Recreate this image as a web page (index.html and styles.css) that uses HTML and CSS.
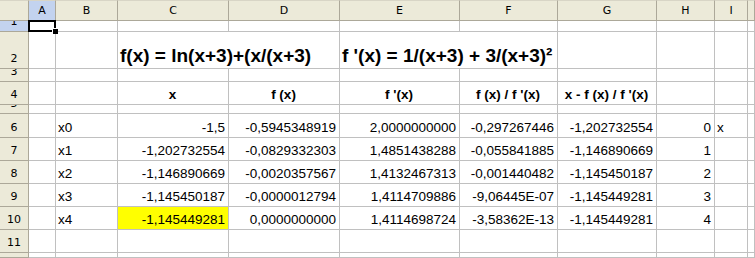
FILE: index.html
```html
<html>
    <head>
        <title>Newton - ln(x+3)</title>
        <link rel="stylesheet" href="styles.css">
    </head>
    <body>
        <div class="sheet">
            <div class="corner"></div>
            <div class="colhead sel">A</div>
            <div class="colhead">B</div>
            <div class="colhead">C</div>
            <div class="colhead">D</div>
            <div class="colhead">E</div>
            <div class="colhead">F</div>
            <div class="colhead">G</div>
            <div class="colhead">H</div>
            <div class="colhead">I</div>
            <div class="colhead"></div>

            <div class="rowhead sel">1</div>
            <div class="cell active"><span class="frame"><span class="handle"></span></span></div>
            <div class="cell"></div><div class="cell"></div><div class="cell"></div><div class="cell"></div>
            <div class="cell"></div><div class="cell"></div><div class="cell"></div><div class="cell"></div><div class="cell"></div>

            <div class="rowhead">2</div>
            <div class="cell"></div><div class="cell"></div>
            <div class="cell title wide">f(x) = ln(x+3)+(x/(x+3)</div>
            <div class="cell title wide">f '(x) = 1/(x+3) + 3/(x+3)²</div>
            <div class="cell"></div><div class="cell"></div><div class="cell"></div><div class="cell"></div>

            <div class="rowhead">3</div>
            <div class="cell"></div><div class="cell"></div><div class="cell"></div><div class="cell"></div><div class="cell"></div>
            <div class="cell"></div><div class="cell"></div><div class="cell"></div><div class="cell"></div><div class="cell"></div>

            <div class="rowhead">4</div>
            <div class="cell"></div><div class="cell"></div>
            <div class="cell hdr">x</div>
            <div class="cell hdr">f (x)</div>
            <div class="cell hdr">f '(x)</div>
            <div class="cell hdr">f (x) / f '(x)</div>
            <div class="cell hdr">x - f (x) / f '(x)</div>
            <div class="cell"></div><div class="cell"></div><div class="cell"></div>

            <div class="rowhead">5</div>
            <div class="cell"></div><div class="cell"></div><div class="cell"></div><div class="cell"></div><div class="cell"></div>
            <div class="cell"></div><div class="cell"></div><div class="cell"></div><div class="cell"></div><div class="cell"></div>

            <div class="rowhead">6</div>
            <div class="cell"></div>
            <div class="cell">x0</div>
            <div class="cell num">-1,5</div>
            <div class="cell num">-0,5945348919</div>
            <div class="cell num">2,0000000000</div>
            <div class="cell num">-0,297267446</div>
            <div class="cell num">-1,202732554</div>
            <div class="cell num">0</div>
            <div class="cell">x</div>
            <div class="cell"></div>

            <div class="rowhead">7</div>
            <div class="cell"></div>
            <div class="cell">x1</div>
            <div class="cell num">-1,202732554</div>
            <div class="cell num">-0,0829332303</div>
            <div class="cell num">1,4851438288</div>
            <div class="cell num">-0,055841885</div>
            <div class="cell num">-1,146890669</div>
            <div class="cell num">1</div>
            <div class="cell"></div><div class="cell"></div>

            <div class="rowhead">8</div>
            <div class="cell"></div>
            <div class="cell">x2</div>
            <div class="cell num">-1,146890669</div>
            <div class="cell num">-0,0020357567</div>
            <div class="cell num">1,4132467313</div>
            <div class="cell num">-0,001440482</div>
            <div class="cell num">-1,145450187</div>
            <div class="cell num">2</div>
            <div class="cell"></div><div class="cell"></div>

            <div class="rowhead">9</div>
            <div class="cell"></div>
            <div class="cell">x3</div>
            <div class="cell num">-1,145450187</div>
            <div class="cell num">-0,0000012794</div>
            <div class="cell num">1,4114709886</div>
            <div class="cell num">-9,06445E-07</div>
            <div class="cell num">-1,145449281</div>
            <div class="cell num">3</div>
            <div class="cell"></div><div class="cell"></div>

            <div class="rowhead">10</div>
            <div class="cell"></div>
            <div class="cell">x4</div>
            <div class="cell num result">-1,145449281</div>
            <div class="cell num">0,0000000000</div>
            <div class="cell num">1,4114698724</div>
            <div class="cell num">-3,58362E-13</div>
            <div class="cell num">-1,145449281</div>
            <div class="cell num">4</div>
            <div class="cell"></div><div class="cell"></div>

            <div class="rowhead">11</div>
            <div class="cell"></div><div class="cell"></div><div class="cell"></div><div class="cell"></div><div class="cell"></div>
            <div class="cell"></div><div class="cell"></div><div class="cell"></div><div class="cell"></div><div class="cell"></div>

            <div class="rowhead"></div>
            <div class="cell"></div><div class="cell"></div><div class="cell"></div><div class="cell"></div><div class="cell"></div>
            <div class="cell"></div><div class="cell"></div><div class="cell"></div><div class="cell"></div><div class="cell"></div>
        </div>
    </body>
</html>
```

FILE: styles.css
```css
body{
    margin: 0;
    background: #ffffff;
    overflow: hidden;
}
.sheet{
    display: grid;
    grid-template-columns: 29px 27px 62px 111px 111px 120px 98px 99px 58px 33px 1fr;
    grid-template-rows: 21px 11px 37px 13px 23px 9px 24px 23px 23px 23px 23px 23px 1fr;
    height: 100vh;
    font-family: 'Liberation Sans', Arial, sans-serif;
    font-size: 13.5px;
    color: #000000;
}
.corner, .colhead, .rowhead{
    box-sizing: border-box;
    background-color: #ecead9;
    border-right: 1px solid #aca899;
    border-bottom: 1px solid #aca899;
    font-family: 'DejaVu Sans', Tahoma, sans-serif;
    font-size: 11px;
    color: #000000;
    display: flex;
    justify-content: center;
    overflow: hidden;
}
.colhead{
    align-items: center;
    border-top: 1px solid #d8d5c6;
}
.corner{
    border-top: 1px solid #d8d5c6;
}
.rowhead{
    align-items: flex-end;
    padding-bottom: 3px;
    line-height: 12px;
}
.colhead.sel{
    background-color: #c3d3ef;
    border-bottom: 1px solid #6f8fcf;
}
.rowhead.sel{
    background-color: #c3d3ef;
    border-right: 1px solid #6f8fcf;
}
.cell{
    box-sizing: border-box;
    border-right: 1px solid #c0c0c0;
    border-bottom: 1px solid #c0c0c0;
    display: flex;
    align-items: flex-end;
    padding: 0 3px 2px 2px;
    line-height: 15px;
    white-space: nowrap;
}
.num{
    justify-content: flex-end;
}
.hdr{
    justify-content: center;
    font-weight: bold;
}
.title{
    font-size: 19px;
    font-weight: bold;
    line-height: 22px;
    padding-bottom: 1px;
}
.wide{
    grid-column: span 2;
}
.result{
    background-color: #ffff00;
}
.active{
    position: relative;
}
.frame{
    position: absolute;
    left: -1px;
    top: -1px;
    right: -1px;
    bottom: -1px;
    border: 2px solid #000000;
}
.handle{
    position: absolute;
    right: -4px;
    bottom: -4px;
    width: 5px;
    height: 5px;
    background: #000000;
    border-left: 1px solid #ffffff;
    border-top: 1px solid #ffffff;
}
```
